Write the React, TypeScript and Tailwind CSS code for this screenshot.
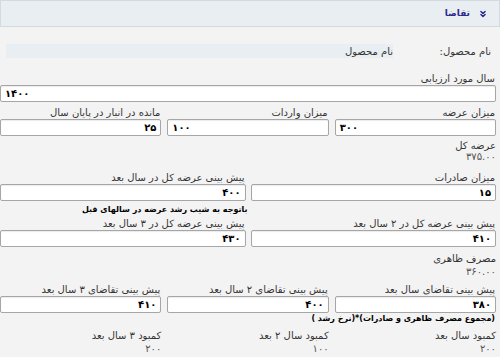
import { ChevronsDown } from "lucide-react";

function Field({ label, value, ltr }: { label: string; value: string; ltr?: boolean }) {
  return (
    <div className="flex flex-col flex-1 min-w-0">
      <div className="h-[13px] leading-[13px] text-[10px] text-[#333] pr-[1px] whitespace-nowrap">{label}</div>
      <div
        className={`h-[17px] bg-white border border-[#a6a6a6] rounded-[2px] shadow-[inset_0_1px_1px_rgba(0,0,0,0.08)] px-[4px] flex items-center text-[10px] font-bold text-black ${
          ltr ? "justify-end" : "justify-start"
        }`}
      >
        {value}
      </div>
    </div>
  );
}

function Stat({ label, value, row = "h-[13px] leading-[13px]" }: { label: string; value: string; row?: string }) {
  return (
    <div className="flex flex-col flex-1 text-[10px] text-[#333]">
      <div className={row}>{label}</div>
      <div className={`${row} text-[#555]`}>{value}</div>
    </div>
  );
}

export default function App() {
  return (
    <div
      dir="rtl"
      className="w-[500px] h-[357px] bg-[#f3f3f3] overflow-hidden"
      style={{ fontFamily: '"DejaVu Sans", sans-serif' }}
    >
      {/* header */}
      <div className="h-[27px] bg-[#e8eef1] border border-[#d3dbe0] flex items-center gap-[8px] pr-[11px]">
        <ChevronsDown size={10} strokeWidth={3.5} className="text-[#2a2a8c]" />
        <span className="text-[9px] font-bold text-[#2a2a8c]">تقاضا</span>
      </div>

      <div className="pr-[4px]">
        {/* product name */}
        <div className="flex items-center mt-[17px] h-[14px]">
          <div className="w-[103px] text-[10px] text-[#333] pr-[5px]">نام محصول:</div>
          <div className="flex-1 ml-[6px] h-[14px] bg-[#e8eef1] text-[10px] text-[#333] flex items-center">
            نام محصول
          </div>
        </div>

        <div className="mt-[14px]">
          <Field label="سال مورد ارزیابی" value="۱۴۰۰" ltr />
        </div>

        <div className="flex gap-[6px] mt-[4px]">
          <Field label="میزان عرضه" value="۳۰۰" ltr />
          <Field label="میزان واردات" value="۱۰۰" ltr />
          <Field label="مانده در انبار در پایان سال" value="۲۵" />
        </div>

        <div className="mt-[4px]">
          <Stat label="عرضه کل" value="۳۷۵.۰۰" row="h-[11px] leading-[11px]" />
        </div>

        <div className="flex gap-[5px] mt-[9px]">
          <Field label="میزان صادرات" value="۱۵" />
          <Field label="پیش بینی عرضه کل در سال بعد" value="۴۰۰" />
        </div>
        <div className="flex mt-[3px]">
          <div className="flex-1" />
          <div className="flex-1 text-[8px] font-bold text-black h-[12px] leading-[12px] pr-[1px]">
            باتوجه به شیب رشد عرضه در سالهای قبل
          </div>
        </div>

        <div className="flex gap-[5px] mt-[1px]">
          <Field label="پیش بینی عرضه کل در ۲ سال بعد" value="۴۱۰" />
          <Field label="پیش بینی عرضه کل در ۳ سال بعد" value="۴۳۰" />
        </div>

        <div className="mt-[5px]">
          <Stat label="مصرف ظاهری" value="۳۶۰.۰۰" />
        </div>

        <div className="flex gap-[6px] mt-[5px]">
          <Field label="پیش بینی تقاضای سال بعد" value="۳۸۰" />
          <Field label="پیش بینی تقاضای ۲ سال بعد" value="۴۰۰" />
          <Field label="پیش بینی تقاضای ۳ سال بعد" value="۴۱۰" />
        </div>
        <div className="text-[8px] font-bold text-black h-[12px] leading-[12px] pr-[1px]">
          (مجموع مصرف ظاهری و صادرات)*(نرخ رشد )
        </div>

        <div className="flex gap-[6px] mt-[4px]">
          <Stat label="کمبود سال بعد" value="۲۰۰" />
          <Stat label="کمبود سال ۲ بعد" value="۱۰۰" />
          <Stat label="کمبود ۳ سال بعد" value="۲۰۰" />
        </div>
      </div>
    </div>
  );
}
